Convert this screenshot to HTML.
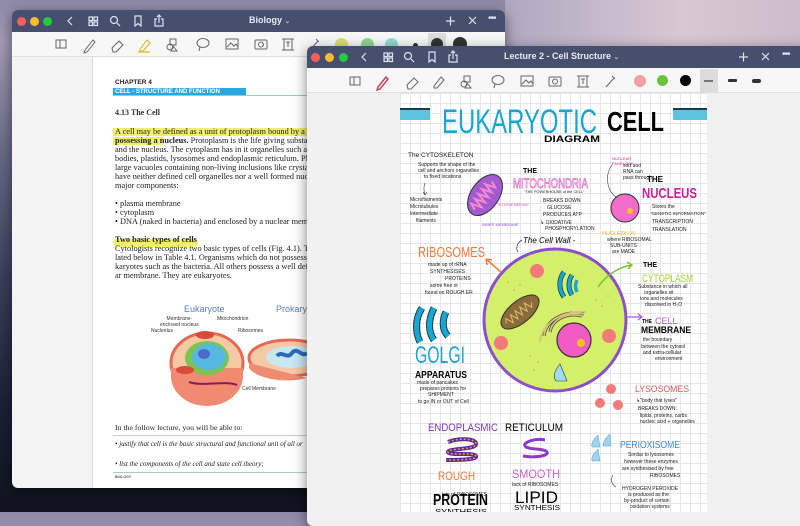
<!DOCTYPE html>
<html><head><meta charset="utf-8"><style>
*{margin:0;padding:0;box-sizing:border-box}
body{width:800px;height:512px;overflow:hidden;position:relative;font-family:"Liberation Sans",sans-serif;
background:linear-gradient(180deg,#8e8aa8 0%,#a49cb6 8%,#6a6a88 30%,#3a3e5a 55%,#1c2036 80%,#11131f 100%);}
.sky{position:absolute;left:505px;top:0;width:295px;height:47px;background:linear-gradient(90deg,#b0a8c0,#d8c8d4 60%,#cdbccb);}
.win{position:absolute;border-radius:6px;overflow:hidden;box-shadow:0 4px 14px rgba(0,0,0,.5)}
.tb{position:absolute;left:0;right:0;top:0;background:#46506e;color:#fff}
.tl{position:absolute;width:9px;height:9px;border-radius:50%}
.tool{position:absolute;left:0;right:0;background:#f7f7f8;border-bottom:1px solid #dedede}
.serif{font-family:"Liberation Serif",serif}
.p{position:absolute;left:103px;font-size:8.3px;color:#222;white-space:nowrap;font-family:"Liberation Serif",serif}
</style></head><body>
<div class="sky"></div>

<!-- Window 1 -->
<div class="win" style="left:12px;top:10px;width:493px;height:478px;background:#f3f3f4">
 <div class="tb" style="height:22px">
  <div class="tl" style="left:5px;top:7px;background:#fe5f57"></div>
  <div class="tl" style="left:18px;top:7px;background:#febc2e"></div>
  <div class="tl" style="left:31px;top:7px;background:#28c840"></div>
  <svg width="493" height="22" style="position:absolute;left:0;top:0" fill="none" stroke="#dfe3ee" stroke-width="1.2">
   <path d="M60 7l-4 4 4 4"/>
   <rect x="77" y="7" width3="3" width="3.5" height="3.5"/><rect x="82" y="7" width="3.5" height="3.5"/><rect x="77" y="12" width="3.5" height="3.5"/><rect x="82" y="12" width="3.5" height="3.5"/>
   <circle cx="102" cy="10" r="3.5"/><path d="M105 13l3 3"/>
   <path d="M123 6h6v10l-3-2.5-3 2.5z"/>
   <path d="M145 9h-2v7h8v-7h-2M147 13V5M145 7l2-2 2 2"/>
   <path d="M434 11h9M438.5 6.5v9M457 7l7 7M464 7l-7 7"/>
  </svg>
  <div style="position:absolute;left:237px;top:5px;font-size:9px;font-weight:bold;color:#e8ebf3">Biology <span style="font-size:7px;opacity:.7">⌄</span></div>
  <div style="position:absolute;left:476px;top:3px;font-size:10px;color:#dfe3ee;letter-spacing:-1px">•••</div>
 </div>
 <div class="tool" style="top:22px;height:25px">
  <svg width="493" height="25" style="position:absolute;left:0;top:0" fill="none" stroke="#666" stroke-width="1">
   <rect x="44" y="8" width="10" height="8"/><path d="M48 8v8"/>
   <path d="M73 18l8-10 2 2-8 10-3 1z"/>
   <path d="M100 16l7-7 4 4-7 7h-3z"/>
   <path d="M128 17l7-9 3 3-7 8h-3z" stroke="#c8b820"/><path d="M126 20h12" stroke="#d8cc30" stroke-width="1.5"/>
   <circle cx="158" cy="15" r="3"/><rect x="158" y="7" width="6" height="6"/><path d="M161 14l4 5h-6z"/>
   <ellipse cx="191" cy="11" rx="6" ry="4.5"/><path d="M188 15l-1 4"/>
   <rect x="214" y="7" width="12" height="10"/><path d="M215 15l4-4 3 3 2-2 2 3"/>
   <rect x="243" y="8" width="12" height="9" rx="1"/><circle cx="249" cy="12.5" r="2.5"/>
   <path d="M270 7h12M270 18h12M272 7v11M280 7v11"/><path d="M274 10h4M276 10v5"/>
   <path d="M298 18l8-9M304 7l3 3"/>
  </svg>
  <div style="position:absolute;left:323px;top:6px;width:13px;height:13px;border-radius:50%;background:#dcdc78"></div>
  <div style="position:absolute;left:349px;top:6px;width:13px;height:13px;border-radius:50%;background:#8fd88f"></div>
  <div style="position:absolute;left:373px;top:6px;width:13px;height:13px;border-radius:50%;background:#92dcd6"></div>
  <div style="position:absolute;left:401px;top:11px;width:5px;height:5px;border-radius:50%;background:#333"></div>
  <div style="position:absolute;left:416px;top:1px;width:18px;height:22px;background:#ddd"></div>
  <div style="position:absolute;left:419px;top:6px;width:12px;height:12px;border-radius:50%;background:#333"></div>
  <div style="position:absolute;left:441px;top:5px;width:14px;height:14px;border-radius:50%;background:#333"></div>
 </div>
 <div style="position:absolute;left:80px;top:47px;width:1px;height:431px;background:#dcdcdc"></div>
 <div style="position:absolute;left:81px;top:47px;width:420px;height:431px;background:#fff">
  <div style="position:absolute;left:22px;top:22px;font-size:6.5px;font-weight:bold;color:#222">CHAPTER 4</div>
  <div style="position:absolute;left:20px;top:31px;width:133px;height:8px;background:#2aa6e0;color:#fff;font-size:6px;font-weight:bold;padding-left:2px;line-height:8px">CELL - STRUCTURE AND FUNCTION</div>
  <div style="position:absolute;left:20px;top:38px;width:300px;height:1px;background:#8ccbe6"></div>
  <div style="position:absolute;left:22px;top:51px;font-size:8px;font-weight:bold;color:#333" class="serif">4.13 The Cell</div>
 </div>
 <div style="position:absolute;left:101px;top:118px;width:210px;height:8px;background:#f3f06a"></div>
 <div style="position:absolute;left:101px;top:127px;width:50px;height:8px;background:#f3f06a"></div>
 <div style="position:absolute;left:101px;top:229px;width:85px;height:8px;background:#f3f06a;border-radius:4px"></div>
 <div class="p" style="top:117px">A cell may be defined as a unit of protoplasm bound by a pla</div>
 <div class="p" style="top:126px"><span style="font-weight:bold">possessing a nucleus.</span> Protoplasm is the life giving substance</div>
 <div class="p" style="top:135px">and the nucleus. The cytoplasm has in it organelles such as r</div>
 <div class="p" style="top:144px">bodies, plastids, lysosomes and endoplasmic reticulum. Plan</div>
 <div class="p" style="top:153px">large vacuoles containing non-living inclusions like crystals,</div>
 <div class="p" style="top:162px">have neither defined cell organelles nor a well formed nucle</div>
 <div class="p" style="top:171px">major components:</div>
 <div class="p" style="top:189px">• plasma membrane</div>
 <div class="p" style="top:198px">• cytoplasm</div>
 <div class="p" style="top:207px">• DNA (naked in bacteria) and enclosed by a nuclear membr</div>
 <div class="p" style="top:225px;font-weight:bold">Two basic types of cells</div>
 <div class="p" style="top:234px">Cytologists recognize two basic types of cells (Fig. 4.1). Th</div>
 <div class="p" style="top:243px">lated below in Table 4.1. Organisms which do not possess a</div>
 <div class="p" style="top:252px">karyotes such as the bacteria. All others possess a well defi</div>
 <div class="p" style="top:261px">ar membrane. They are eukaryotes.</div>
 <div style="position:absolute;left:172px;top:294px;font-size:9px;color:#5a80b8">Eukaryote</div>
 <div style="position:absolute;left:264px;top:294px;font-size:9px;color:#5a80b8">Prokary</div>
 <div style="position:absolute;left:148px;top:306px;font-size:5px;color:#333;line-height:6px;text-align:center">Membrane-<br>enclosed nucleus</div>
 <div style="position:absolute;left:205px;top:306px;font-size:5px;color:#333">Mitochondrion</div>
 <div style="position:absolute;left:139px;top:318px;font-size:5px;color:#333">Nucleolus</div>
 <div style="position:absolute;left:226px;top:318px;font-size:5px;color:#333">Ribosomes</div>
 <div style="position:absolute;left:230px;top:376px;font-size:5px;color:#333">Cell Membrane</div>
 <svg width="140" height="80" style="position:absolute;left:155px;top:318px">
  <ellipse cx="40" cy="35" rx="36" ry="30" fill="#f6c9a5" stroke="#e46a55" stroke-width="3"/>
  <path d="M4 40v8a36 30 0 0 0 72 0v-8" fill="#f08a70" />
  <ellipse cx="40" cy="30" rx="22" ry="17" fill="#7bc453"/>
  <ellipse cx="42" cy="29" rx="17" ry="13" fill="#56b8e0"/>
  <ellipse cx="37" cy="26" rx="6" ry="5" fill="#4a6cc8"/>
  <ellipse cx="38" cy="7" rx="9" ry="4" fill="#d84a3a"/>
  <ellipse cx="18" cy="42" rx="9" ry="4" fill="#d84a3a"/>
  <path d="M22 54c15 5 35 -2 48 3" stroke="#8a1a5a" stroke-width="2" fill="none"/>
  <ellipse cx="122" cy="30" rx="40" ry="18" fill="#f6c9a5" stroke="#e46a55" stroke-width="3"/>
  <path d="M82 35v5a40 18 0 0 0 58 10" fill="#f08a70"/>
  <ellipse cx="125" cy="29" rx="26" ry="11" fill="#c8e8f0"/>
  <path d="M110 28c5-6 10 4 15-3s10 5 15 0" stroke="#2a6abc" stroke-width="4" fill="none"/>
 </svg>
 <div class="p" style="top:413px;font-size:7.8px">In the follow lecture, you will be able to:</div>
 <div style="position:absolute;left:101px;top:425px;width:210px;height:1px;background:#ccc"></div>
 <div class="p" style="top:430px;font-size:7px;font-style:italic">• justify that cell is the basic structural and functional unit of all or</div>
 <div class="p" style="top:450px;font-size:7px;font-style:italic">• list the components of the cell and state cell theory;</div>
 <div style="position:absolute;left:101px;top:462px;width:210px;height:1px;background:#a9c8d6"></div>
 <div style="position:absolute;left:103px;top:465px;font-size:3.5px;color:#555;font-weight:bold">BIOLOGY</div>
</div>

<!-- Window 2 -->
<div class="win" style="left:307px;top:46px;width:500px;height:480px;background:#f1f1f2">
 <div class="tb" style="height:22px">
  <div class="tl" style="left:4px;top:7px;background:#fe5f57"></div>
  <div class="tl" style="left:18px;top:7px;background:#febc2e"></div>
  <div class="tl" style="left:32px;top:7px;background:#28c840"></div>
  <svg width="493" height="22" style="position:absolute;left:0;top:0" fill="none" stroke="#dfe3ee" stroke-width="1.2">
   <path d="M59 7l-4 4 4 4"/>
   <rect x="77" y="7" width="3.5" height="3.5"/><rect x="82" y="7" width="3.5" height="3.5"/><rect x="77" y="12" width="3.5" height="3.5"/><rect x="82" y="12" width="3.5" height="3.5"/>
   <circle cx="101" cy="10" r="3.5"/><path d="M104 13l3 3"/>
   <path d="M122 6h6v10l-3-2.5-3 2.5z"/>
   <path d="M144 9h-2v7h8v-7h-2M146 13V5M144 7l2-2 2 2"/>
   <path d="M432 11h9M436.5 6.5v9M455 7l7 7M462 7l-7 7"/>
  </svg>
  <div style="position:absolute;left:197px;top:5px;font-size:9px;font-weight:bold;color:#e8ebf3">Lecture 2 - Cell Structure <span style="font-size:7px;opacity:.7">⌄</span></div>
  <div style="position:absolute;left:475px;top:3px;font-size:10px;color:#dfe3ee;letter-spacing:-1px">•••</div>
 </div>
 <div class="tool" style="top:22px;height:25px">
  <svg width="493" height="25" style="position:absolute;left:0;top:0" fill="none" stroke="#666" stroke-width="1">
   <rect x="43" y="9" width="10" height="8"/><path d="M47 9v8"/>
   <path d="M71 19l8-10 2 2-8 10-3 1z" stroke="#c04a5a" stroke-width="1.5"/>
   <path d="M100 17l7-7 4 4-7 7h-3z"/>
   <path d="M127 18l7-9 3 3-7 8h-3z"/>
   <circle cx="187" cy="16" r="3" transform="translate(-30 0)"/><rect x="157" y="8" width="6" height="6"/><path d="M160 15l4 5h-6z"/>
   <ellipse cx="191" cy="12" rx="6" ry="4.5"/><path d="M188 16l-1 4"/>
   <rect x="214" y="8" width="12" height="10"/><path d="M215 16l4-4 3 3 2-2 2 3"/>
   <rect x="242" y="9" width="12" height="9" rx="1"/><circle cx="248" cy="13.5" r="2.5"/>
   <path d="M270 8h12M270 19h12M272 8v11M280 8v11"/><path d="M274 11h4M276 11v5"/>
   <path d="M299 19l8-9M305 8l3 3"/>
  </svg>
  <div style="position:absolute;left:327px;top:7px;width:12px;height:12px;border-radius:50%;background:#f4a0a2"></div>
  <div style="position:absolute;left:350px;top:7px;width:11px;height:11px;border-radius:50%;background:#6cc23a"></div>
  <div style="position:absolute;left:373px;top:7px;width:11px;height:11px;border-radius:50%;background:#000"></div>
  <div style="position:absolute;left:393px;top:1px;width:18px;height:23px;background:#dcdcdc"></div>
  <div style="position:absolute;left:397px;top:12px;width:9px;height:1.5px;background:#777"></div>
  <div style="position:absolute;left:421px;top:11px;width:9px;height:2.5px;background:#333;border-radius:1px"></div>
  <div style="position:absolute;left:445px;top:11px;width:9px;height:3.5px;background:#333;border-radius:2px"></div>
 </div>
</div>

<!-- note page -->
<div style="position:absolute;left:400px;top:93px;width:307px;height:419px;background-color:#fff;
background-image:linear-gradient(#e6e6ea 1px,transparent 1px),linear-gradient(90deg,#e6e6ea 1px,transparent 1px);background-size:10px 10px">
<svg width="307" height="419" style="position:absolute;left:0;top:0" font-family="Liberation Sans, sans-serif">
 <g transform="translate(-400 -93)">
 <rect x="400" y="108" width="30" height="12" fill="#5ec3df"/><rect x="400" y="108" width="30" height="2" fill="#1b3b4f"/>
 <rect x="673" y="108" width="34" height="12" fill="#5ec3df"/><rect x="673" y="108" width="34" height="2" fill="#1b3b4f"/>
 <text x="442" y="133" font-size="34" fill="#1aa6cf" textLength="155" lengthAdjust="spacingAndGlyphs" font-weight="300">EUKARYOTIC</text>
 <text x="607" y="131" font-size="28" fill="#000" font-weight="bold" textLength="57" lengthAdjust="spacingAndGlyphs">CELL</text>
 <text x="544" y="142" font-size="9" font-weight="bold" textLength="56" lengthAdjust="spacingAndGlyphs">DIAGRAM</text>
 <g font-size="5" fill="#222">
 <text x="408" y="157" font-size="6.5">The CYTOSKELETON</text>
 <text x="418" y="166">Supports the shape of the</text><text x="418" y="172">cell and anchors organelles</text><text x="424" y="178">to fixed locations</text>
 <text x="410" y="201">Microfilaments</text><text x="410" y="208">Microtubules</text><text x="410" y="215">Intermediate</text><text x="416" y="222">filaments</text>
 <text x="543" y="202">BREAKS DOWN</text><text x="547" y="209">GLUCOSE</text><text x="543" y="216">PRODUCES ATP</text>
 <text x="540" y="224">↳ OXIDATIVE</text><text x="545" y="230">PHOSPHORYLATION</text>
 <text x="524" y="193" font-size="3.8">"THE POWERHOUSE of the CELL"</text>
 <text x="623" y="167">sort and</text><text x="623" y="173">RNA can</text><text x="623" y="179">pass through</text>
 <text x="652" y="208">Stores the</text><text x="650" y="215" font-size="4.5">"GENETIC INFORMATION"</text>
 <text x="652" y="223">TRANSCRIPTION</text><text x="652" y="231">TRANSLATION</text>
 <text x="607" y="241">where RIBOSOMAL</text><text x="610" y="247">SUB-UNITS</text><text x="612" y="253">are MADE</text>
 <text x="428" y="266">made up of rRNA</text><text x="430" y="273">SYNTHESISES</text><text x="445" y="280">PROTEINS</text><text x="430" y="287">some free or</text><text x="425" y="294">found on ROUGH ER</text>
 <text x="638" y="288">Substance in which all</text><text x="644" y="294">organelles sit</text><text x="640" y="300">ions and molecules</text><text x="645" y="306">dissolved in H₂O</text>
 <text x="643" y="341">the boundary</text><text x="641" y="348">between the cytosol</text><text x="643" y="354">and extra-cellular</text><text x="655" y="360">environment</text>
 <text x="417" y="384">made of pancakes</text><text x="420" y="390">prepares proteins for</text><text x="428" y="396">SHIPMENT</text><text x="418" y="403">to go IN or OUT of Cell</text>
 <text x="636" y="402">↳"body that lyses"</text><text x="638" y="410">BREAKS DOWN:</text><text x="640" y="417">lipids, proteins, carbs</text><text x="640" y="423">nucleic acid + organelles</text>
 <text x="628" y="456">Similar to lysosomes</text><text x="624" y="463">however these enzymes</text><text x="622" y="470">are synthesised by free</text><text x="650" y="477">RIBOSOMES</text>
 <text x="622" y="490">HYDROGEN PEROXIDE</text><text x="628" y="496">is produced as the</text><text x="624" y="502">by-product of certain</text><text x="630" y="508">oxidation systems</text>
 <text x="442" y="496">lots of RIBOSOMES</text><text x="512" y="486">lack of RIBOSOMES</text>
 </g>
 <path d="M425 183c-2 5-1 9 0 12M423 192l2 3 2-3" stroke="#333" fill="none" stroke-width=".6"/>
 <g transform="rotate(-55 485 195)"><ellipse cx="485" cy="195" rx="23" ry="14" fill="#a35bd0" stroke="#333" stroke-width="1"/>
  <path d="M467 195l3-6 3 10 3-10 3 10 3-10 3 10 3-10 3 10 3-10 3 10 3-6" stroke="#f58ad4" stroke-width="2" fill="none"/></g>
 <text x="482" y="226" font-size="4" fill="#8a4fc9">INNER MEMBRANE</text>
 <text x="498" y="206" font-size="3.5" fill="#e05ac0">INTERMEMBRANE</text>
 <text x="523" y="173" font-size="7" font-weight="bold">THE</text>
 <text x="513" y="188" font-size="14" fill="#fff" stroke="#e46ac8" stroke-width=".8" textLength="75" lengthAdjust="spacingAndGlyphs">MITOCHONDRIA</text>
 <path d="M612 165c-8 10-5 28 6 33" stroke="#333" fill="none" stroke-width=".6"/>
 <text x="612" y="160" font-size="4" fill="#d0209a">NUCLEAR</text><text x="612" y="165" font-size="4" fill="#d0209a">ENVELOPE</text>
 <circle cx="625" cy="208" r="14" fill="#f26ccc" stroke="#333" stroke-width="1"/>
 <circle cx="630" cy="211" r="3" fill="#f7c11b"/>
 <text x="647" y="182" font-size="8" font-weight="bold">THE</text>
 <text x="642" y="198" font-size="15" fill="#d0209a" font-weight="bold" textLength="55" lengthAdjust="spacingAndGlyphs">NUCLEUS</text>
 <text x="602" y="235" font-size="5.5" fill="#f0b81b">NUCLEOLUS</text>
 <path d="M518 252c-3-4 0-10 4-12" stroke="#333" fill="none" stroke-width=".7"/>
 <text x="523" y="243" font-size="8" font-style="italic">The Cell Wall -</text>
 <text x="418" y="257" font-size="15" fill="#f07a3a" textLength="67" lengthAdjust="spacingAndGlyphs">RIBOSOMES</text>
 <path d="M502 273l-16-14M486 259l6 1M486 259l1 6" stroke="#f07a3a" stroke-width="1.5" fill="none"/>
 <circle cx="555" cy="320" r="71" fill="#d4f06a" stroke="#8a4fc9" stroke-width="3"/>
 <circle cx="537" cy="271" r="7" fill="#f47a7a"/><circle cx="501" cy="343" r="7" fill="#f47a7a"/><circle cx="609" cy="336" r="7" fill="#f47a7a"/>
 <g fill="none" stroke="#1b3b4f" stroke-width="5"><path d="M564 272c-6 8-5 18 0 25"/><path d="M572 275c-4 6-4 14 0 20"/></g>
 <g fill="none" stroke="#1aa6cf" stroke-width="3.5"><path d="M564 272c-6 8-5 18 0 25"/><path d="M572 275c-4 6-4 14 0 20"/><path d="M577 280c-2 4-2 8 0 12"/></g>
 <g transform="rotate(-40 520 312)"><ellipse cx="520" cy="312" rx="23" ry="11" fill="#8a6c3a" stroke="#333"/>
 <path d="M502 312l3-4 3 8 3-8 3 8 3-8 3 8 3-8 3 8 3-8 3 8 3-4" stroke="#e0c070" fill="none"/></g>
 <g fill="none" stroke="#333" stroke-width="3"><path d="M544 336c2-16 20-26 40-22"/><path d="M550 332c2-12 16-20 32-16"/></g>
 <g fill="none" stroke="#d6c47a" stroke-width="1.8"><path d="M544 336c2-16 20-26 40-22"/><path d="M550 332c2-12 16-20 32-16"/><path d="M540 342c1-18 22-32 46-30"/></g>
 <circle cx="574" cy="340" r="17" fill="#f05cc4" stroke="#333" stroke-width="1.2"/>
 <circle cx="581" cy="343" r="4" fill="#f7c11b"/>
 <path d="M560 364l7 17h-11c-4-5 0-12 4-17z" fill="#9fdcf0" stroke="#333" stroke-width=".6"/>
 <g fill="#e0a040"><circle cx="508" cy="282" r=".8"/><circle cx="514" cy="290" r=".8"/><circle cx="520" cy="285" r=".8"/><circle cx="530" cy="356" r=".8"/><circle cx="538" cy="362" r=".8"/><circle cx="534" cy="370" r=".8"/><circle cx="596" cy="300" r=".8"/><circle cx="602" cy="306" r=".8"/><circle cx="608" cy="296" r=".8"/></g>
 <path d="M598 287c10-14 22-20 34-22M627 262l5 3-4 4" stroke="#7cc42a" stroke-width="1.5" fill="none"/>
 <text x="643" y="267" font-size="7" font-weight="bold">THE</text>
 <text x="642" y="282" font-size="11" fill="#a6d43a" textLength="51" lengthAdjust="spacingAndGlyphs">CYTOPLASM</text>
 <path d="M627 317h15M638 314l4 3-4 3" stroke="#a45ae0" stroke-width="1.2" fill="none"/>
 <text x="642" y="323" font-size="5" font-weight="bold">THE</text><text x="655" y="324" font-size="9" fill="#a45ae0">CELL</text>
 <text x="641" y="333" font-size="9" font-weight="bold" textLength="50" lengthAdjust="spacingAndGlyphs">MEMBRANE</text>
 <g fill="none" stroke="#1b3b4f" stroke-width="7"><path d="M422 308c-8 12-6 26 -2 34"/><path d="M434 308c-6 12-6 24 0 32"/><path d="M446 312c-4 8-4 18 2 24"/></g>
 <g fill="none" stroke="#1aa6cf" stroke-width="5"><path d="M422 308c-8 12-6 26 -2 34"/><path d="M434 308c-6 12-6 24 0 32"/><path d="M446 312c-4 8-4 18 2 24"/></g>
 <text x="415" y="363" font-size="24" fill="#1aa6cf" textLength="50" lengthAdjust="spacingAndGlyphs">GOLGI</text>
 <text x="415" y="378" font-size="10" font-weight="bold" textLength="52" lengthAdjust="spacingAndGlyphs">APPARATUS</text>
 <circle cx="611" cy="389" r="5" fill="#f47a7a"/><circle cx="600" cy="403" r="5" fill="#f47a7a"/><circle cx="618" cy="405" r="5" fill="#f47a7a"/>
 <text x="635" y="392" font-size="9" fill="#e8555f" textLength="54" lengthAdjust="spacingAndGlyphs">LYSOSOMES</text>
 <text x="428" y="431" font-size="11" fill="#7a3ab8" textLength="70" lengthAdjust="spacingAndGlyphs">ENDOPLASMIC</text>
 <text x="505" y="431" font-size="11" textLength="58" lengthAdjust="spacingAndGlyphs">RETICULUM</text>
 <path d="M448 442c10-4 28-4 28 2s-28 4-28 8 26 0 28 4-20 4-30 4" stroke="#5a2a9a" stroke-width="4" fill="none"/>
 <path d="M448 442c10-4 28-4 28 2s-28 4-28 8 26 0 28 4-20 4-30 4" stroke="#f0a030" stroke-width="1.5" stroke-dasharray="2 2" fill="none"/>
 <path d="M545 440c-10 -2-22 2-20 6s20 2 22 6-12 6-24 4" stroke="#8a3ac8" stroke-width="3" fill="none"/>
 <text x="438" y="480" font-size="12" fill="#f07a3a" textLength="37" lengthAdjust="spacingAndGlyphs">ROUGH</text>
 <text x="512" y="478" font-size="12" fill="#d160d0" textLength="48" lengthAdjust="spacingAndGlyphs">SMOOTH</text>
 <text x="433" y="505" font-size="16" font-weight="bold" textLength="55" lengthAdjust="spacingAndGlyphs">PROTEIN</text>
 <text x="515" y="503" font-size="17" textLength="43" lengthAdjust="spacingAndGlyphs">LIPID</text>
 <text x="435" y="514" font-size="7.5" textLength="52" lengthAdjust="spacingAndGlyphs">SYNTHESIS</text>
 <text x="514" y="510" font-size="7.5" textLength="46" lengthAdjust="spacingAndGlyphs">SYNTHESIS</text>
 <g fill="#9fd4ee" stroke="#5a9ac8" stroke-width=".5"><path d="M598 435l2 12h-8c-1-4 2-9 6-12z"/><path d="M610 434l1 12h-8c0-4 3-9 7-12z"/><path d="M598 449l2 12h-8c-1-4 2-9 6-12z"/></g>
 <text x="620" y="448" font-size="10" fill="#3a90e0" textLength="60" lengthAdjust="spacingAndGlyphs">PERIOXISOME</text>
 <path d="M613 475c-3 5-1 10 3 12" stroke="#333" fill="none" stroke-width=".6"/>
 </g>
</svg>
</div>
</body></html>
